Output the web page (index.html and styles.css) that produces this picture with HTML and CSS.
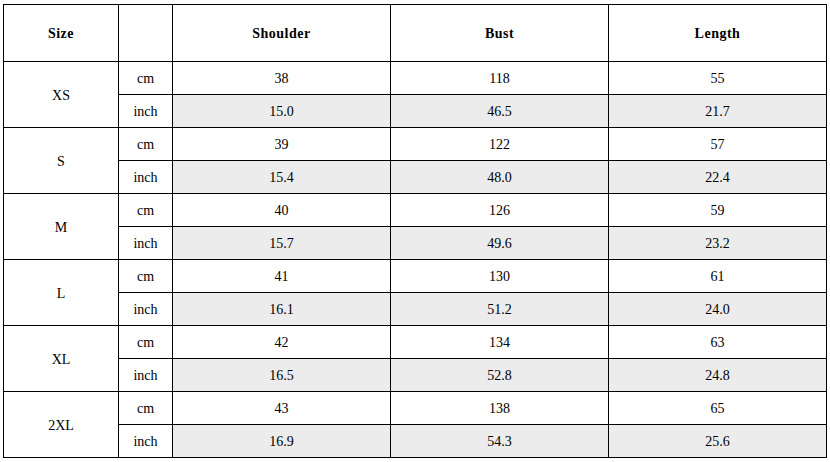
FILE: index.html
```html
<!DOCTYPE html>
<html>
<head>
<meta charset="utf-8">
<link rel="stylesheet" href="styles.css">
</head>
<body>
<div class="wrap">
<table class="size-table">
<colgroup>
<col class="c-size"><col class="c-unit"><col class="c-val"><col class="c-val"><col class="c-val">
</colgroup>
<thead>
<tr class="head"><th>Size</th><th></th><th>Shoulder</th><th>Bust</th><th>Length</th></tr>
</thead>
<tbody>
<tr><td rowspan="2">XS</td><td>cm</td><td>38</td><td>118</td><td>55</td></tr>
<tr class="alt"><td class="unit">inch</td><td>15.0</td><td>46.5</td><td>21.7</td></tr>
<tr><td rowspan="2">S</td><td>cm</td><td>39</td><td>122</td><td>57</td></tr>
<tr class="alt"><td class="unit">inch</td><td>15.4</td><td>48.0</td><td>22.4</td></tr>
<tr><td rowspan="2">M</td><td>cm</td><td>40</td><td>126</td><td>59</td></tr>
<tr class="alt"><td class="unit">inch</td><td>15.7</td><td>49.6</td><td>23.2</td></tr>
<tr><td rowspan="2">L</td><td>cm</td><td>41</td><td>130</td><td>61</td></tr>
<tr class="alt"><td class="unit">inch</td><td>16.1</td><td>51.2</td><td>24.0</td></tr>
<tr><td rowspan="2">XL</td><td>cm</td><td>42</td><td>134</td><td>63</td></tr>
<tr class="alt"><td class="unit">inch</td><td>16.5</td><td>52.8</td><td>24.8</td></tr>
<tr><td rowspan="2">2XL</td><td>cm</td><td>43</td><td>138</td><td>65</td></tr>
<tr class="alt"><td class="unit">inch</td><td>16.9</td><td>54.3</td><td>25.6</td></tr>
</tbody>
</table>
</div>
</body>
</html>
```
FILE: styles.css
```css
html, body {
  margin: 0;
  padding: 0;
  background: #ffffff;
}
.wrap {
  padding: 4px 3px 0 3px;
}
.size-table {
  border-collapse: collapse;
  table-layout: fixed;
  width: 824px;
  font-family: "Liberation Serif", "Times New Roman", serif;
  font-size: 14px;
  color: #000;
}
.c-size { width: 115px; }
.c-unit { width: 54px; }
.c-val { width: 218px; }
.size-table th,
.size-table td {
  border: 1px solid #000;
  padding: 2px 0 0 0;
  text-align: center;
  vertical-align: middle;
}
.size-table th {
  font-weight: bold;
  letter-spacing: 0.5px;
}
.head {
  height: 57px;
}
.size-table tbody tr {
  height: 33px;
}
.alt td {
  background: #ececec;
}
.alt td.unit {
  background: #ffffff;
}
```
